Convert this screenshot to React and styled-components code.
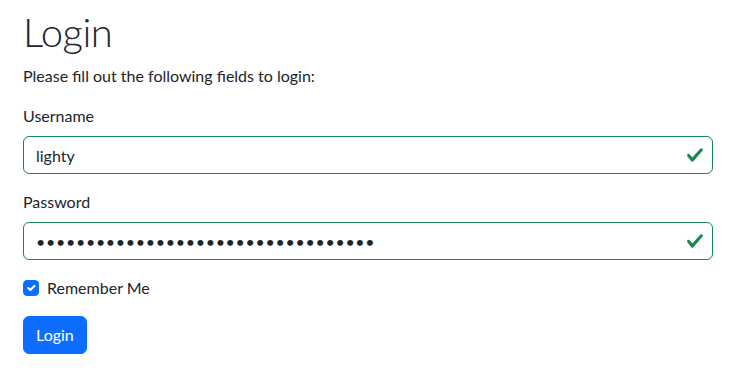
import React from "react";
import styled, { createGlobalStyle } from "styled-components";

const GlobalStyle = createGlobalStyle`
  * { box-sizing: border-box; }
  body {
    margin: 0;
    background: #fff;
    color: #212529;
    font-family: "Lato", "Noto Sans", sans-serif;
    font-size: 16px;
    line-height: 1.5;
  }
`;

const Page = styled.div`
  padding: 8px 25px 0 23px;
`;

const Title = styled.h1`
  margin: 0 0 8px;
  font-size: 40px;
  font-weight: 300;
  line-height: 1.2;
  letter-spacing: -0.5px;
`;

const Lead = styled.p`
  margin: 0 0 16px;
`;

const Field = styled.div`
  margin-bottom: 16px;
`;

const Label = styled.label`
  display: inline-block;
  margin-bottom: 8px;
`;

const InputWrap = styled.div`
  position: relative;
`;

const Input = styled.input`
  display: block;
  width: 100%;
  height: 38px;
  padding: 6px 42px 6px 12px;
  font: inherit;
  color: #212529;
  background: #fff;
  border: 1px solid ${(p) => (p.$valid ? "#198754" : "#dee2e6")};
  border-radius: 6px;
  outline: none;
  letter-spacing: ${(p) => (p.type === "password" ? "0.7px" : "normal")};
`;

const ValidIcon = styled.svg`
  position: absolute;
  right: 9px;
  top: 50%;
  width: 18px;
  height: 18px;
  margin-top: -9px;
`;

const CheckRow = styled.label`
  display: flex;
  align-items: center;
  gap: 8px;
  min-height: 24px;
  margin-bottom: 2px;
  cursor: pointer;
`;

const CheckBox = styled.span`
  display: inline-flex;
  align-items: center;
  justify-content: center;
  width: 16px;
  height: 16px;
  border-radius: 4px;
  background: ${(p) => (p.$checked ? "#0d6efd" : "#fff")};
  border: 1px solid ${(p) => (p.$checked ? "#0d6efd" : "#dee2e6")};
`;

const Button = styled.button`
  display: inline-block;
  padding: 6px 12px;
  font: inherit;
  line-height: 1.5;
  color: #fff;
  background: #0d6efd;
  border: 1px solid #0d6efd;
  border-radius: 6px;
  cursor: pointer;
`;

const Check = () => (
  <ValidIcon viewBox="0 0 8 8">
    <path
      fill="#198754"
      d="M2.3 6.73.6 4.53c-.4-1.04.46-1.4 1.1-.8l1.1 1.4 3.4-3.8c.6-.63 1.6-.27 1.2.7l-4 4.6c-.43.5-.8.4-1.1.1z"
    />
  </ValidIcon>
);

const TextField = ({ id, label, type = "text", value }) => (
  <Field>
    <Label htmlFor={id}>{label}</Label>
    <InputWrap>
      <Input id={id} type={type} defaultValue={value} $valid />
      <Check />
    </InputWrap>
  </Field>
);

export default function App() {
  return (
    <Page>
      <GlobalStyle />
      <Title>Login</Title>
      <Lead>Please fill out the following fields to login:</Lead>
      <TextField id="username" label="Username" value="lighty" />
      <TextField id="password" label="Password" type="password" value={"x".repeat(34)} />
      <Field>
        <CheckRow>
          <CheckBox $checked>
            <svg viewBox="0 0 20 20" width="16" height="16">
              <path
                d="m6 10 3 3 6-6"
                fill="none"
                stroke="#fff"
                strokeWidth="3"
                strokeLinecap="round"
                strokeLinejoin="round"
              />
            </svg>
          </CheckBox>
          Remember Me
        </CheckRow>
      </Field>
      <Button type="button">Login</Button>
    </Page>
  );
}
